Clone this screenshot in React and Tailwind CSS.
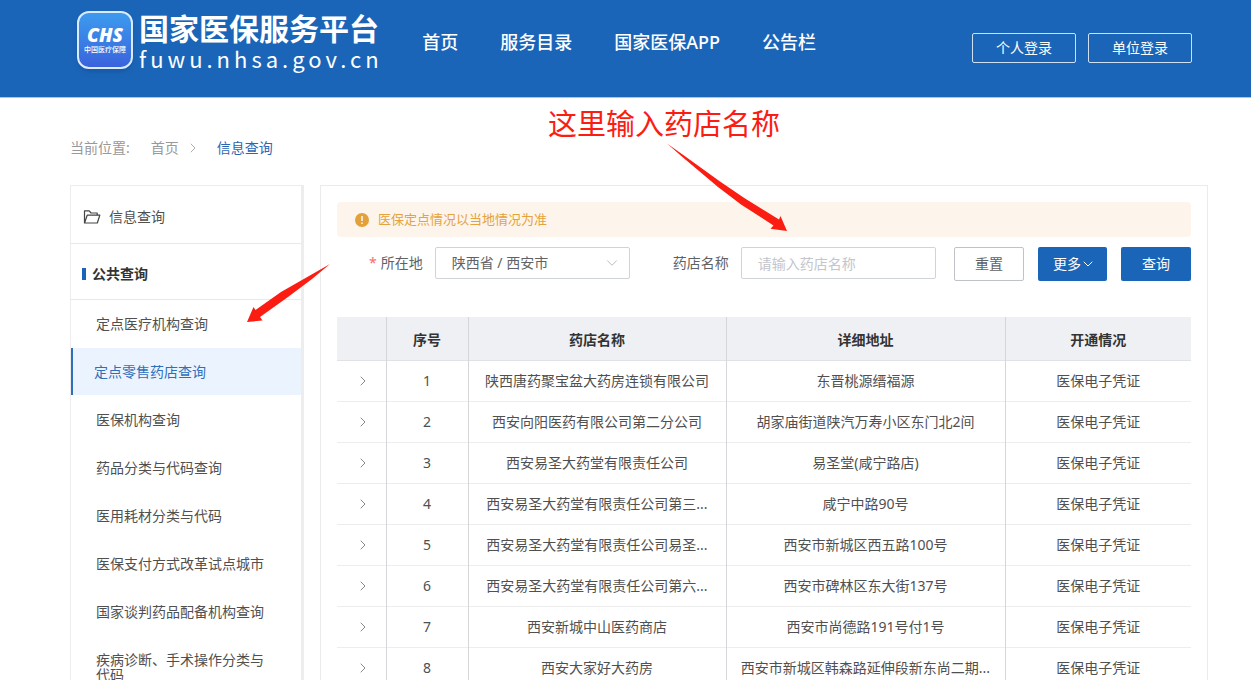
import React, { useState } from 'react';
import { ChevronDown, ChevronRight } from 'lucide-react';

const NAV = ['首页', '服务目录', '国家医保APP', '公告栏'];

const MENU = [
  '定点医疗机构查询',
  '定点零售药店查询',
  '医保机构查询',
  '药品分类与代码查询',
  '医用耗材分类与代码',
  '医保支付方式改革试点城市',
  '国家谈判药品配备机构查询',
  '疾病诊断、手术操作分类与代码',
];

const STORES = [
  { name: '陕西唐药聚宝盆大药房连锁有限公司', address: '东晋桃源缙福源' },
  { name: '西安向阳医药有限公司第二分公司', address: '胡家庙街道陕汽万寿小区东门北2间' },
  { name: '西安易圣大药堂有限责任公司', address: '易圣堂(咸宁路店)' },
  { name: '西安易圣大药堂有限责任公司第三...', address: '咸宁中路90号' },
  { name: '西安易圣大药堂有限责任公司易圣...', address: '西安市新城区西五路100号' },
  { name: '西安易圣大药堂有限责任公司第六...', address: '西安市碑林区东大街137号' },
  { name: '西安新城中山医药商店', address: '西安市尚德路191号付1号' },
  { name: '西安大家好大药房', address: '西安市新城区韩森路延伸段新东尚二期...' },
];

function Header() {
  return (
    <header className="flex h-[98px] items-start border-b border-[#a9c6e6] bg-[#1b65b9] pr-[59px] pl-[77px] text-white">
      <a href="#home" className="mt-[11px] flex shrink-0 items-start gap-[6px]">
        <span className="flex h-[58px] w-14 flex-col items-center justify-center rounded-xl border-2 border-[#d9ebff] bg-linear-to-b from-[#3d9bee] to-[#3a62dc] shadow-md">
          <span className="text-[19px] leading-5 font-black italic">CHS</span>
          <span className="text-[7px] leading-[10px] font-medium whitespace-nowrap">中国医疗保障</span>
        </span>
        <span className="flex flex-col">
          <span className="text-[30px] leading-9 font-bold">国家医保服务平台</span>
          <span className="font-['Noto_Sans_CJK_SC',sans-serif] text-[22px] leading-[22px] tracking-[4px]">fuwu.nhsa.gov.cn</span>
        </span>
      </a>

      <nav className="mt-[30px] ml-auto flex gap-[42px] text-lg leading-6 font-medium whitespace-nowrap">
        {NAV.map(item => (
          <a key={item} href="#nav">{item}</a>
        ))}
      </nav>

      <div className="mt-[33px] ml-[156px] flex shrink-0 gap-3">
        <button type="button" className="h-[30px] w-[104px] rounded-xs border border-[#cfe0f3] text-sm">个人登录</button>
        <button type="button" className="h-[30px] w-[104px] rounded-xs border border-[#cfe0f3] text-sm">单位登录</button>
      </div>
    </header>
  );
}

function Sidebar() {
  const [active, setActive] = useState(1);

  return (
    <aside className="w-[234px] shrink-0 border border-r-3 border-[#ededed] text-sm text-[#505050]">
      <div className="flex h-[58px] items-center gap-2 border-b border-[#e9e9e9] pt-1 pl-3">
        <svg viewBox="0 0 18 16" className="h-4 w-[18px]" fill="none" stroke="#444" strokeWidth="1.2" strokeLinejoin="round">
          <path d="M1.5 14V1.8H6.2L8 4H14.2V6.2" />
          <path d="M1.5 14L4.2 6.2H16.8L14.3 14Z" />
        </svg>
        <span>信息查询</span>
      </div>
      <div className="flex h-14 items-center gap-[6px] border-b border-[#e9e9e9] pt-1 pl-[11px]">
        <span className="h-3 w-1 bg-[#1b65b9]" />
        <h2 className="font-bold text-[#333]">公共查询</h2>
      </div>
      <ul className="flex flex-col gap-px">
        {MENU.map((item, i) => (
          <li key={item}>
            <a
              href="#menu"
              onClick={() => setActive(i)}
              className={
                i === active
                  ? 'block border-l-2 border-[#2f6fba] bg-[#ebf4fe] py-4 pr-8 pl-[21px] leading-[15px] text-[#2f6fba]'
                  : 'block py-4 pr-8 pl-[25px] leading-[15px]'
              }
            >
              {item}
            </a>
          </li>
        ))}
      </ul>
    </aside>
  );
}

function SearchForm() {
  const [keyword, setKeyword] = useState('');

  return (
    <form className="mt-[10px] flex items-start pl-8 text-sm text-[#606266]" onSubmit={e => e.preventDefault()}>
      <label htmlFor="region" className="mr-3 leading-8 whitespace-nowrap">
        <span className="mr-1 text-[#f56c6c]">*</span>所在地
      </label>
      <div className="relative flex-1">
        <select id="region" className="h-8 w-full appearance-none rounded-xs border border-[#d0d3da] bg-white pl-4 text-[#606266]">
          <option>陕西省 / 西安市</option>
        </select>
        <ChevronDown size={18} strokeWidth={1.2} className="pointer-events-none absolute top-[7px] right-[9px] text-[#b0b3ba]" />
      </div>

      <label htmlFor="store" className="mr-3 ml-[43px] leading-8 whitespace-nowrap">药店名称</label>
      <div className="flex-1">
        <input
          id="store"
          value={keyword}
          onChange={e => setKeyword(e.target.value)}
          placeholder="请输入药店名称"
          className="h-8 w-full rounded-xs border border-[#d0d3da] px-4 placeholder:text-[#c3c6cd]"
        />
      </div>

      <div className="ml-[18px] flex gap-[14px]">
        <button type="button" className="h-[34px] w-[70px] rounded-xs border border-[#bfc2c9]" onClick={() => setKeyword('')}>重置</button>
        <button type="button" className="flex h-[34px] w-[69px] items-center justify-center rounded-xs bg-[#1b65b9] pl-1 text-white">
          更多<ChevronDown size={16} strokeWidth={1.5} className="-ml-px" />
        </button>
        <button type="submit" className="h-[34px] w-[70px] rounded-xs bg-[#1b65b9] text-white">查询</button>
      </div>
    </form>
  );
}

function StoreTable() {
  return (
    <table className="mt-9 w-full table-fixed text-center text-sm text-[#505050]">
      <colgroup>
        <col className="w-[49px]" />
        <col className="w-[82px]" />
        <col className="w-[258px]" />
        <col className="w-[279px]" />
        <col className="w-[186px]" />
      </colgroup>
      <thead className="bg-[#eef0f4] text-[#333]">
        <tr className="h-[43px] border-b border-[#e0e2e6]">
          <th className="border-r border-[#d4d6da]" aria-label="展开" />
          <th className="border-r border-[#d4d6da] pt-1">序号</th>
          <th className="border-r border-[#d4d6da] pt-1">药店名称</th>
          <th className="border-r border-[#d4d6da] pt-1">详细地址</th>
          <th className="pt-1">开通情况</th>
        </tr>
      </thead>
      <tbody>
        {STORES.map((store, i) => (
          <tr key={store.name} className="h-[41px] border-b border-[#ededed]">
            <td className="border-r border-[#d4d6da]">
              <button type="button" aria-label="展开" className="block w-full pl-1">
                <ChevronRight size={16} strokeWidth={1.5} className="mx-auto text-[#888]" />
              </button>
            </td>
            <td className="border-r border-[#d4d6da]">{i + 1}</td>
            <td className="border-r border-[#d4d6da] whitespace-nowrap">{store.name}</td>
            <td className="border-r border-[#d4d6da] whitespace-nowrap">{store.address}</td>
            <td>医保电子凭证</td>
          </tr>
        ))}
      </tbody>
    </table>
  );
}

// Red hints laid over the page
function Hints() {
  return (
    <div className="pointer-events-none absolute inset-0">
      <p className="absolute top-[102px] left-[548px] text-[29px] leading-[44px] whitespace-nowrap text-[#fb1d12]">这里输入药店名称</p>
      <svg className="absolute top-[140px] left-[660px] h-24 w-[132px]" viewBox="660 140 132 96" fill="#fb1d12">
        <path d="M667 143.5L684 155.5L720 181.5L745 198.5L779 219.5L780.5 216L787 231L770.5 228.7L773.5 225.5L741 204.5L718 187L683 157.5Z" />
      </svg>
      <svg className="absolute top-[260px] left-[244px] h-16 w-[90px]" viewBox="244 260 90 64" fill="#fb1d12">
        <path d="M330 264L281 292L255.5 310L253.5 307L247 322L262.5 320.5L260 317L288 297L312 279Z" />
      </svg>
    </div>
  );
}

export default function App() {
  return (
    <div className="relative h-screen overflow-hidden bg-white font-['Noto_Sans','Noto_Sans_CJK_SC',sans-serif]">
      <Header />

      <div className="pr-[43px] pl-[70px]">
        <nav className="flex h-[87px] items-center pt-[13px] text-sm text-[#999]">
          <span>当前位置:</span>
          <a href="#home" className="ml-[21px]">首页</a>
          <ChevronRight size={16} strokeWidth={1.2} className="mr-4 ml-[6px]" />
          <a href="#query" className="text-[#2b66b4]">信息查询</a>
        </nav>

        <div className="flex items-start gap-4">
          <Sidebar />
          <main className="min-w-0 flex-1 border border-[#ebebeb] p-4">
            <div className="flex h-[35px] items-center gap-[9px] rounded-sm bg-[#fdf5eb] pl-[18px] text-[13px] text-[#e6a23c]">
              <svg viewBox="0 0 14 14" className="size-[14px]">
                <circle cx="7" cy="7" r="7" fill="#e3a03b" />
                <path d="M7 3V8M7 9.6V11" stroke="#fff" strokeWidth="1.4" />
              </svg>
              <span>医保定点情况以当地情况为准</span>
            </div>
            <SearchForm />
            <StoreTable />
          </main>
        </div>
      </div>

      <Hints />
    </div>
  );
}
